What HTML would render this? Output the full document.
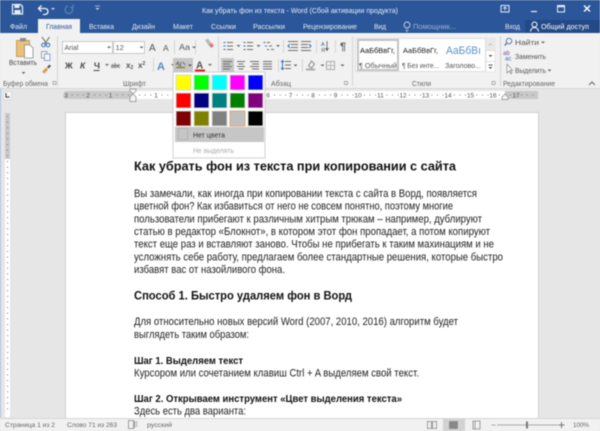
<!DOCTYPE html>
<html><head><meta charset="utf-8"><style>
html,body{margin:0;padding:0;width:600px;height:431px;overflow:hidden;background:#e6e6e6}
svg{display:block;filter:blur(.4px);font-family:"Liberation Sans",sans-serif}
text{white-space:pre}
.tab{font-size:7.500px;fill:#e4eaf4}
.u{font-size:7.500px;fill:#555}
.g{font-size:7.500px;fill:#666}
.s{font-size:6.800px;fill:#666}
.b{font-size:10.600px;fill:#222}
.h{font-weight:bold;fill:#111}
.ico{fill:none;stroke:#6d6d6d;stroke-width:1}
.blu{fill:none;stroke:#3d6db0;stroke-width:1}
.ch{fill:#666}
.rn{font-size:6.500px;fill:#555;paint-order:stroke;stroke:#fff;stroke-width:2.500px}
.rg{font-size:6.500px;fill:#555;paint-order:stroke;stroke:#c9c9c9;stroke-width:2.500px}
.sw{stroke:#d8d8d8;stroke-width:1}
</style></head><body>
<svg width="600" height="431" viewBox="0 0 600 431" xmlns="http://www.w3.org/2000/svg">
<rect width="600" height="431" fill="#e6e6e6"/>
<!-- title -->
<rect width="600" height="33" fill="#2b579a"/>
<path d="M12.500 4.500h8l2 2v7.500h-10z" fill="none" stroke="#e6ecf5" stroke-width="1.300"/><rect x="14.500" y="5" width="5" height="3" fill="#e6ecf5"/><rect x="14.500" y="10" width="6" height="3.500" fill="#e6ecf5"/>
<path d="M39 8.500h6a3 3 0 0 1 0 6h-2M41.500 5.500l-3 3 3 3" fill="none" stroke="#eef2f8" stroke-width="1.300"/>
<path d="M51 8l2 2 2-2z" fill="#cfd9ea"/>
<path d="M68 6a3.800 3.800 0 1 0 4 1.500M73 4.500v3h-3" fill="none" stroke="#5f80b5" stroke-width="1.200"/>
<path d="M95 6h5" stroke="#cfd9ea" stroke-width=".7"/><path d="M95.500 8l2 2 2-2z" fill="#cfd9ea"/>
<rect x="501" y="5.500" width="8" height="6.500" fill="none" stroke="#e6ecf5"/><path d="M505 7v3.500M503.300 8.700l1.700-1.700 1.700 1.700" stroke="#e6ecf5" fill="none" stroke-width=".8"/>
<path d="M531 11.500h6" stroke="#e6ecf5" stroke-width="1.200"/>
<rect x="557.500" y="5.500" width="7" height="6.500" fill="none" stroke="#e6ecf5"/><path d="M557.500 6.500h7" stroke="#e6ecf5" stroke-width="1.500"/>
<path d="M584 5.500l6 6M590 5.500l-6 6" stroke="#fff" stroke-width="1.400"/>
<text x="202" y="13" font-size="7.500" fill="#e8edf6" textLength="196" lengthAdjust="spacingAndGlyphs">Как убрать фон из текста - Word (Сбой активации продукта)</text>
<rect x="38" y="19" width="42" height="15" fill="#f1f1f1"/>
<rect x="525" y="20" width="75" height="13" fill="#234a86"/>
<text class="tab" x="10" y="29" textLength="17" lengthAdjust="spacingAndGlyphs">Файл</text>
<text class="tab" x="46" y="29" textLength="26" lengthAdjust="spacingAndGlyphs" style="fill:#2b579a">Главная</text>
<text class="tab" x="89" y="29" textLength="25" lengthAdjust="spacingAndGlyphs">Вставка</text>
<text class="tab" x="132" y="29" textLength="23" lengthAdjust="spacingAndGlyphs">Дизайн</text>
<text class="tab" x="173" y="29" textLength="20" lengthAdjust="spacingAndGlyphs">Макет</text>
<text class="tab" x="211" y="29" textLength="25" lengthAdjust="spacingAndGlyphs">Ссылки</text>
<text class="tab" x="253" y="29" textLength="32" lengthAdjust="spacingAndGlyphs">Рассылки</text>
<text class="tab" x="303" y="29" textLength="54" lengthAdjust="spacingAndGlyphs">Рецензирование</text>
<text class="tab" x="374" y="29" textLength="12" lengthAdjust="spacingAndGlyphs">Вид</text>
<circle cx="407" cy="25" r="3" fill="none" stroke="#c5d1e6" stroke-width=".9"/><path d="M405.500 30h3M406 31.500h2" stroke="#c5d1e6" stroke-width=".8"/>
<text class="tab" x="413" y="29" textLength="43" lengthAdjust="spacingAndGlyphs" style="fill:#9db2d4">Помощник...</text>
<text class="tab" x="505" y="29" textLength="15" lengthAdjust="spacingAndGlyphs">Вход</text>
<circle cx="534.500" cy="24.500" r="2.500" fill="none" stroke="#fff"/><path d="M530.500 31.500a4 4 0 0 1 8 0" fill="none" stroke="#fff"/>
<text class="tab" x="541" y="29" textLength="48" lengthAdjust="spacingAndGlyphs" style="fill:#fff">Общий доступ</text>

<!-- ribbon -->
<rect y="33" width="600" height="55" fill="#f1f1f1"/><rect y="88" width="600" height="1" fill="#d6d6d6"/>
<g fill="#d4d4d4"><rect x="57" y="36" width="1" height="50"/><rect x="218" y="36" width="1" height="50"/><rect x="352" y="36" width="1" height="50"/><rect x="500" y="36" width="1" height="50"/><rect x="153" y="58" width="1" height="14"/><rect x="174" y="40" width="1" height="14"/><rect x="195" y="40" width="1" height="14"/><rect x="283" y="40" width="1" height="13"/><rect x="316" y="40" width="1" height="13"/><rect x="335" y="40" width="1" height="13"/><rect x="278" y="59" width="1" height="13"/><rect x="302" y="59" width="1" height="13"/></g>
<!-- clipboard -->
<rect x="16.500" y="40.500" width="13" height="16" fill="#eac17a" stroke="#c99c55"/><rect x="20" y="38" width="6" height="3.500" fill="#8d8d8d"/><path d="M24.500 45h5.500l3 3v10h-8.500z" fill="#fff" stroke="#8a8a8a" stroke-width=".8"/>
<path d="M42 37l4.500 6.500M49.500 37l-4.500 6.500" stroke="#666" stroke-width="1" fill="none"/><circle cx="43.500" cy="45" r="1.800" fill="none" stroke="#3d6db0"/><circle cx="48" cy="45" r="1.800" fill="none" stroke="#3d6db0"/>
<rect x="41.500" y="51.500" width="5.500" height="6.500" fill="#f7f7f7" stroke="#8fa6c5"/><rect x="44.500" y="54" width="5.500" height="6.500" fill="#f7f7f7" stroke="#8fa6c5"/>
<path d="M42 72l4-4.500 2 2-3.500 4z" fill="#d69b4a"/><path d="M47 67l2.500-2.500 1.500 1.500-2.500 2.500z" fill="#555"/>
<path d="M21.500 72l2 2 2-2z" class="ch"/>
<text class="u" x="9" y="65" textLength="28" lengthAdjust="spacingAndGlyphs" style="fill:#444">Вставить</text>
<text class="g" x="3" y="86" textLength="45" lengthAdjust="spacingAndGlyphs">Буфер обмена</text>
<text class="g" x="123" y="86" textLength="23" lengthAdjust="spacingAndGlyphs">Шрифт</text>
<text class="g" x="271" y="86" textLength="20" lengthAdjust="spacingAndGlyphs">Абзац</text>
<text class="g" x="412" y="86" textLength="19" lengthAdjust="spacingAndGlyphs">Стили</text>
<text class="g" x="503" y="86" textLength="52" lengthAdjust="spacingAndGlyphs">Редактирование</text>
<g fill="none" stroke="#999" stroke-width=".7"><path d="M53 81.500h3v3h-3zM344.500 81.500h3v3h-3zM492 81.500h3v3h-3z"/></g><path d="M589 85l3-3 3 3" fill="none" stroke="#666"/>
<!-- font boxes -->
<rect x="62.500" y="41.500" width="50" height="12" fill="#fff" stroke="#c9c9c9"/><rect x="113.500" y="41.500" width="31" height="12" fill="#fff" stroke="#c9c9c9"/>
<text class="u" x="64.500" y="50" textLength="14" lengthAdjust="spacingAndGlyphs">Arial</text><text class="u" x="115.500" y="50">12</text>
<path d="M107 46.500l2 2 2-2zM139.500 46.500l2 2 2-2z" class="ch"/>
<text x="149" y="51" font-size="10" fill="#555">A</text><text x="163" y="51" font-size="8.500" fill="#555">A</text>
<text x="179" y="50" font-size="8.500" fill="#555" textLength="11" lengthAdjust="spacingAndGlyphs">Aa</text>
<path d="M192 46.500l2 2 2-2z" class="ch"/>
<path d="M205 40l4 6 3-1.500-4-6z" fill="#b9b9b9"/><path d="M209 45l2 3 3-2-2-3z" fill="#d9788a"/>
<text x="65" y="68.500" font-size="8.500" font-weight="bold" fill="#444">Ж</text>
<text x="80" y="68.500" font-size="8.500" font-weight="bold" font-style="italic" fill="#444">К</text>
<text x="94" y="68.500" font-size="8.500" font-weight="bold" fill="#444">Ч</text><rect x="93.500" y="70" width="6" height="1" fill="#444"/>
<path d="M105 64l2 2 2-2z" class="ch"/>
<text x="111" y="68" font-size="7" fill="#555" textLength="9" lengthAdjust="spacingAndGlyphs">abc</text><rect x="111" y="65.500" width="9" height=".7" fill="#555"/>
<text x="126" y="68" font-size="8" font-weight="bold" fill="#555">x<tspan font-size="5" dy="1">2</tspan></text>
<text x="138" y="68" font-size="8" font-weight="bold" fill="#555">x<tspan font-size="5" dy="-3">2</tspan></text>
<text x="157" y="70" font-size="11" font-weight="bold" fill="#5b8bc4">A</text><path d="M171 64l2 2 2-2z" class="ch"/>
<rect x="173" y="58" width="20" height="14" fill="#c6c6c6"/>
<path d="M176 65l2-3 1 4M181 62l-1 6M183 62l2 3" fill="none" stroke="#666"/><path d="M176 67.500h9" stroke="#8b8b33" stroke-width="1.500"/><path d="M188 64.500l2 2 2-2z" fill="#555"/>
<text x="196" y="68.500" font-size="10" font-weight="bold" fill="#555">A</text><rect x="195" y="69.500" width="10" height="2" fill="#e01818"/><path d="M208 64l2 2 2-2z" class="ch"/>
<!-- paragraph -->
<path class="ico" d="M227 42.500h6M227 46h6M227 49.500h6M247 42.500h6M247 46h6M247 49.500h6M267 42.500h3M269 46h3M271 49.500h3"/>
<path class="blu" d="M223.500 42.500h2M223.500 46h2M223.500 49.500h2M243.500 42.500h2M243.500 46h2M243.500 49.500h2M263.500 42.500h2M265 46h2M267 49.500h2"/>
<path class="ch" d="M236.500 45l2 2 2-2zM256.500 45l2 2 2-2zM276 45l2 2 2-2z"/>
<path class="ico" d="M288 41.500h10M291 44.500h7M291 47.500h7M288 50.500h10M301 41.500h10M301 44.500h7M301 47.500h7M301 50.500h10"/>
<path class="blu" d="M290 44l-2 2 2 2M309 44l2 2-2 2"/>
<text x="321" y="46" font-size="5.500" fill="#2e5b9e">А</text><text x="321" y="52" font-size="5.500" fill="#555">Я</text><path d="M327 41v9M325.500 48l1.500 2.500 1.500-2.500" fill="none" stroke="#555" stroke-width=".8"/>
<text x="340" y="50" font-size="11" font-weight="bold" fill="#666">¶</text>
<rect x="221" y="58" width="13" height="14" fill="#c6c6c6"/>
<path class="ico" d="M223 61.500h9M223 64h7M223 66.500h9M223 69h7M237 61.500h8M238.500 64h5M237 66.500h8M238.500 69h5M250 61.500h9M252 64h7M250 66.500h9M252 69h7M263 61.500h9M263 64h9M263 66.500h9M263 69h9M285 61.500h6M285 65h6M285 68.500h6"/>
<path class="blu" d="M282.500 60.500v9M281 62l1.500-1.500 1.500 1.500M281 68l1.500 1.500 1.500-1.500"/>
<path class="ch" d="M293.500 64.500l2 2 2-2zM320.500 64.500l2 2 2-2zM340.500 64.500l2 2 2-2z"/>
<path d="M306 69.500h9" stroke="#aaa" stroke-width="2"/><path d="M308.500 66l3-5 3 3-3 4z" fill="none" stroke="#888"/>
<rect x="326.500" y="61.500" width="8" height="8" fill="none" stroke="#aaa"/><path d="M330.500 61.500v8M326.500 65.500h8" stroke="#bbb"/>
<!-- styles -->
<rect x="355.500" y="38.500" width="130" height="33" fill="#fff" stroke="#dedede"/>
<rect x="358" y="40" width="40" height="30" fill="#fff" stroke="#c4c4c4" stroke-width="2"/>
<text x="360" y="53" font-size="7.500" fill="#111" textLength="35" lengthAdjust="spacingAndGlyphs">АаБбВвГг,</text>
<text x="403" y="53" font-size="7.500" fill="#222" textLength="35" lengthAdjust="spacingAndGlyphs">АаБбВвГг,</text>
<text x="446" y="54" font-size="11" fill="#5a93c4" textLength="35" lengthAdjust="spacingAndGlyphs">АаБбВı</text>
<text x="359" y="68" font-size="7" fill="#555" textLength="38" lengthAdjust="spacingAndGlyphs">¶ Обычный</text>
<text x="402" y="68" font-size="7" fill="#555" textLength="37" lengthAdjust="spacingAndGlyphs">¶ Без инте...</text>
<text x="445" y="68" font-size="7" fill="#555" textLength="36" lengthAdjust="spacingAndGlyphs">Заголово...</text>
<rect x="486" y="38" width="9" height="34" fill="#fff" stroke="#dedede" stroke-width=".7"/><rect x="486" y="38" width="9" height="12" fill="#e9e9e9"/>
<path d="M488.500 45l2-2 2 2z" fill="#bbb"/><path d="M488.500 55l2 2 2-2z" fill="#555"/><path d="M488.500 65h4" stroke="#555"/><path d="M488.500 67l2 2 2-2z" fill="#555"/><path d="M486 50.500h9M486 61.500h9" stroke="#dedede"/>
<!-- editing -->
<circle cx="509" cy="41" r="2.800" fill="none" stroke="#5f7fa8"/><path d="M507 43l-2.500 2.500" stroke="#5f7fa8" stroke-width="1.300"/>
<text x="503" y="55" font-size="6" fill="#7a4ea0">ab</text><text x="505" y="60.500" font-size="6" fill="#3d6db0">ac</text>
<path d="M507 64v9l2-2 2 3 1-1-2-2.500h2.500z" fill="#fff" stroke="#888" stroke-width=".7"/>
<text class="u" x="515" y="45" textLength="24" lengthAdjust="spacingAndGlyphs">Найти</text>
<text class="u" x="515" y="59" textLength="31" lengthAdjust="spacingAndGlyphs">Заменить</text>
<text class="u" x="515" y="73" textLength="31" lengthAdjust="spacingAndGlyphs">Выделить</text>
<path class="ch" d="M541 41.500l2 2 2-2zM547.500 69.500l2 2 2-2z"/>

<!-- ruler -->
<rect x="3.500" y="91.500" width="8" height="8" fill="#f7f7f7" stroke="#ddd"/>
<path d="M6 93v4h3.500" fill="none" stroke="#333"/>
<rect x="65" y="91" width="67" height="8" fill="#c9c9c9"/><rect x="132" y="91" width="373" height="8" fill="#fff"/><rect x="505" y="91" width="33" height="8" fill="#c9c9c9"/>
<path d="M66 95H538" stroke="#777" stroke-width="1" stroke-dasharray="1 4.620"/>
<g text-anchor="middle"><text class="rg" x="66" y="97.500">3</text><text class="rg" x="88" y="97.500">2</text><text class="rg" x="110.500" y="97.500">1</text>
<text class="rn" x="156" y="97.500">1</text><text class="rn" x="268" y="97.500">6</text><text class="rn" x="290.500" y="97.500">7</text><text class="rn" x="313" y="97.500">8</text><text class="rn" x="335.500" y="97.500">9</text><text class="rn" x="358" y="97.500">10</text><text class="rn" x="380.500" y="97.500">11</text><text class="rn" x="403" y="97.500">12</text><text class="rn" x="425.500" y="97.500">13</text><text class="rn" x="448" y="97.500">14</text><text class="rn" x="470.500" y="97.500">15</text><text class="rn" x="493" y="97.500">16</text><text class="rg" x="516" y="97.500">17</text></g>
<path d="M130 89h6v2l-3 3-3-3zM133 94l3 3v4.500h-6V97z" fill="#f4f4f4" stroke="#888" stroke-width=".7"/>
<path d="M505 94l3 3v2.500h-6V97z" fill="#f4f4f4" stroke="#888" stroke-width=".7"/>

<!-- doc -->
<rect x="0" y="88" width="1" height="330" fill="#a9c0de"/>
<rect x="5" y="113" width="5" height="46" fill="#c9c9c9"/><rect x="5" y="159" width="5" height="258" fill="#fff"/>
<path d="M7.500 116V412" stroke="#777" stroke-dasharray="1 4.620"/>
<rect x="65.500" y="112.500" width="473" height="306" fill="#fff" stroke="#cfcfcf"/>
<text class="h" x="134" y="170.500" font-size="13" textLength="322" lengthAdjust="spacingAndGlyphs">Как убрать фон из текста при копировании с сайта</text>
<text class="b" x="134" y="197" textLength="343" lengthAdjust="spacingAndGlyphs">Вы замечали, как иногда при копировании текста с сайта в Ворд, появляется</text>
<text class="b" x="134" y="209.700" textLength="319" lengthAdjust="spacingAndGlyphs">цветной фон? Как избавиться от него не совсем понятно, поэтому многие</text>
<text class="b" x="134" y="222.400" textLength="348" lengthAdjust="spacingAndGlyphs">пользователи прибегают к различным хитрым трюкам – например, дублируют</text>
<text class="b" x="134" y="235.200" textLength="356" lengthAdjust="spacingAndGlyphs">статью в редактор «Блокнот», в котором этот фон пропадает, а потом копируют</text>
<text class="b" x="134" y="247.700" textLength="360" lengthAdjust="spacingAndGlyphs">текст еще раз и вставляют заново. Чтобы не прибегать к таким махинациям и не</text>
<text class="b" x="134" y="260.500" textLength="369" lengthAdjust="spacingAndGlyphs">усложнять себе работу, предлагаем более стандартные решения, которые быстро</text>
<text class="b" x="134" y="273" textLength="151" lengthAdjust="spacingAndGlyphs">избавят вас от назойливого фона.</text>
<text class="h" x="134" y="299.500" font-size="11.500" textLength="218" lengthAdjust="spacingAndGlyphs">Способ 1. Быстро удаляем фон в Ворд</text>
<text class="b" x="134" y="325" textLength="324" lengthAdjust="spacingAndGlyphs">Для относительно новых версий Word (2007, 2010, 2016) алгоритм будет</text>
<text class="b" x="134" y="338" textLength="115" lengthAdjust="spacingAndGlyphs">выглядеть таким образом:</text>
<text class="h" x="134" y="364" font-size="10.500" textLength="109" lengthAdjust="spacingAndGlyphs">Шаг 1. Выделяем текст</text>
<text class="b" x="134" y="376.500" textLength="285" lengthAdjust="spacingAndGlyphs">Курсором или сочетанием клавиш Ctrl + A выделяем свой текст.</text>
<text class="h" x="134" y="402" font-size="10.500" textLength="268" lengthAdjust="spacingAndGlyphs">Шаг 2. Открываем инструмент «Цвет выделения текста»</text>
<text class="b" x="134" y="414.500" textLength="112" lengthAdjust="spacingAndGlyphs">Здесь есть два варианта:</text>

<!-- dropdown -->
<rect x="173" y="72" width="92" height="86" fill="#fff" stroke="#bdbdbd" stroke-width=".7"/>
<rect x="173" y="58" width="20" height="14" fill="#c6c6c6"/>
<path d="M176 65l2-3 1 4M181 62l-1 6M183 62l2 3" fill="none" stroke="#666"/><path d="M176 67.500h9" stroke="#8b8b33" stroke-width="1.500"/><path d="M188 64.500l2 2 2-2z" fill="#555"/>
<g class="sw">
<rect x="176" y="75" width="15" height="15" fill="#ffff00"/><rect x="194" y="75" width="15" height="15" fill="#00ff00"/><rect x="212" y="75" width="15" height="15" fill="#00ffff"/><rect x="230" y="75" width="15" height="15" fill="#ff00ff"/><rect x="248" y="75" width="15" height="15" fill="#0000ff"/>
<rect x="176" y="93" width="15" height="15" fill="#ff0000"/><rect x="194" y="93" width="15" height="15" fill="#000080"/><rect x="212" y="93" width="15" height="15" fill="#008080"/><rect x="230" y="93" width="15" height="15" fill="#008000"/><rect x="248" y="93" width="15" height="15" fill="#800080"/>
<rect x="176" y="111" width="15" height="15" fill="#800000"/><rect x="194" y="111" width="15" height="15" fill="#808000"/><rect x="212" y="111" width="15" height="15" fill="#808080"/><rect x="230" y="111" width="15" height="15" fill="#c0c0c0" style="stroke:#e0a878"/><rect x="248" y="111" width="15" height="15" fill="#000000"/>
</g>
<rect x="175" y="127" width="89" height="15" fill="#c6c6c6"/>
<rect x="178.500" y="128.500" width="9" height="11" fill="none" stroke="#b4b4b4"/>
<text x="193" y="137.500" font-size="7.500" fill="#333" textLength="32" lengthAdjust="spacingAndGlyphs">Нет цвета</text>
<text x="193" y="153" font-size="7.500" fill="#aaa" textLength="41" lengthAdjust="spacingAndGlyphs">Не выделять</text>

<!-- status -->
<rect y="418" width="600" height="13" fill="#f1f1f1"/><rect y="418" width="600" height="1" fill="#d6d6d6"/>
<text class="s" x="5" y="427" textLength="50" lengthAdjust="spacingAndGlyphs">Страница 1 из 2</text>
<text class="s" x="67" y="427" textLength="50" lengthAdjust="spacingAndGlyphs">Слово 71 из 263</text>
<text class="s" x="147" y="427" textLength="25" lengthAdjust="spacingAndGlyphs">русский</text>
<rect x="443" y="419" width="22" height="12" fill="#d2d2d2"/>
<g fill="none" stroke="#888" stroke-width=".8"><path d="M128.500 420.500h5v8h-5zM134.500 421v7M135.500 422h2M135.500 424h2M135.500 426h2"/><path d="M427.500 421.500h4v7h-4zM432.500 421.500h4v7h-4z"/><path d="M449.500 421.500h8v7h-8z" fill="#888"/><path d="M473 421h7v8h-7zM475 421v8"/></g>
<path d="M491.500 425h4M497 425h61" stroke="#aaa"/><rect x="526" y="421.500" width="2" height="7" fill="#777"/><path d="M558.500 425h6M561.500 422v6" stroke="#777"/>
<text class="s" x="573" y="427" textLength="16" lengthAdjust="spacingAndGlyphs">100%</text>
</svg>
</body></html>
